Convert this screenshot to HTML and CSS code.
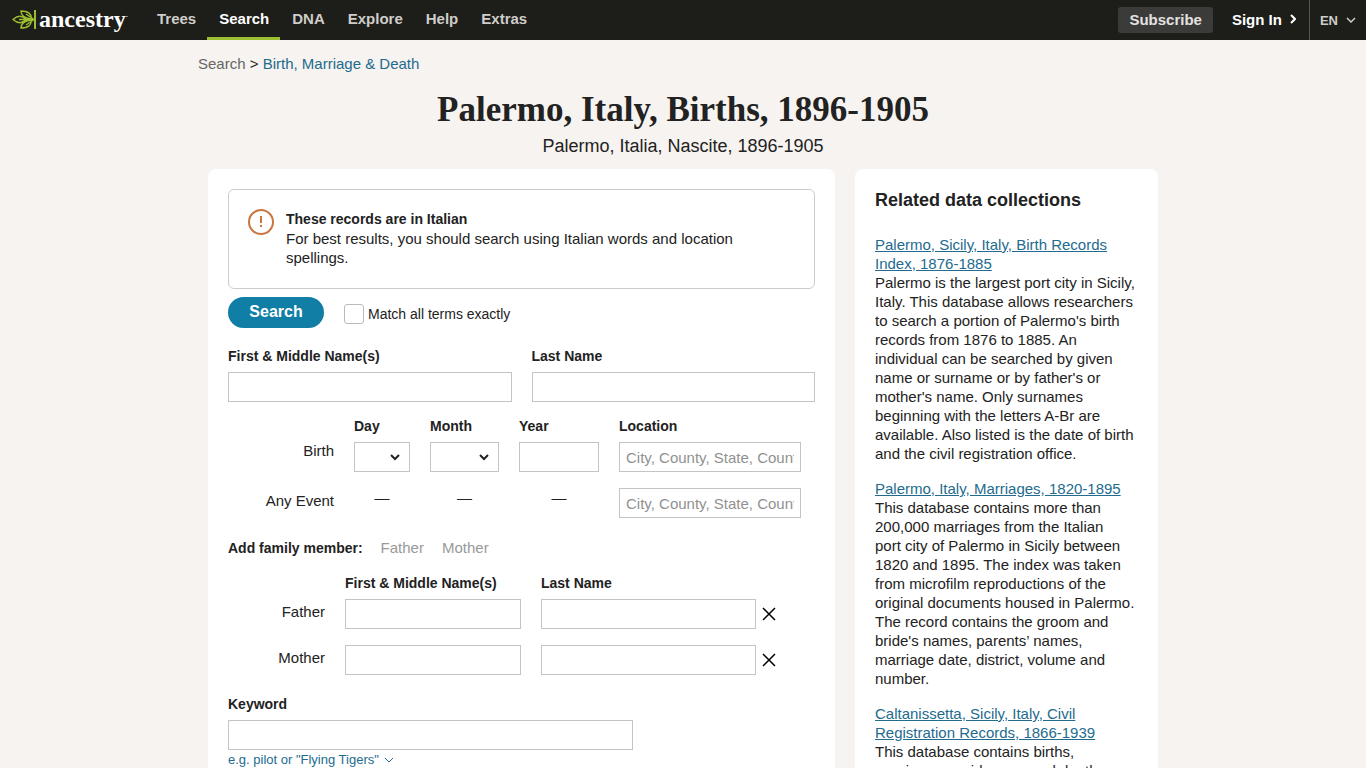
FILE: index.html
```html
<!DOCTYPE html>
<html lang="en">
<head>
<meta charset="utf-8">
<meta name="viewport" content="width=device-width, initial-scale=1">
<title>Palermo, Italy, Births, 1896-1905</title>
<link rel="stylesheet" href="styles.css">
</head>
<body>
<header class="site-header">
  <a class="brand" href="#" aria-label="ancestry">
    <svg class="brand-leaf" viewBox="0 0 24 20" aria-hidden="true">
      <path class="bar" d="M23 0V19"/>
      <path d="M19 9C20 4 16 1 9 1C9 5 12 8 19 9M19 10C20 15 16 18 9 18C9 14 12 11 19 10M22 9.500H7M14 9.500C10 5 5 6 1 9.500C5 13 10 14 14 9.500M22 9.500L14 4M22 9.500L14 15"/>
    </svg>
    <span class="brand-name">ancestry</span><span class="brand-dot">.</span>
  </a>
  <nav class="main-nav" aria-label="Main">
    <a href="#">Trees</a>
    <a class="active" href="#">Search</a>
    <a href="#">DNA</a>
    <a href="#">Explore</a>
    <a href="#">Help</a>
    <a href="#">Extras</a>
  </nav>
  <div class="account">
    <a class="subscribe" href="#">Subscribe</a>
    <a class="sign-in" href="#">Sign In
      <svg width="6" height="10" viewBox="0 0 6 10" aria-hidden="true"><path d="M1 1L5 5L1 9"/></svg>
    </a>
    <button class="language" type="button">EN
      <svg width="10" height="6" viewBox="0 0 10 6" aria-hidden="true"><path d="M1 1L5 5L9 1"/></svg>
    </button>
  </div>
</header>

<div class="page">
  <nav class="breadcrumb" aria-label="Breadcrumb"><a class="muted" href="#">Search</a> &gt; <a href="#">Birth, Marriage &amp; Death</a></nav>
  <div class="titles">
    <h1>Palermo, Italy, Births, 1896-1905</h1>
    <p>Palermo, Italia, Nascite, 1896-1905</p>
  </div>

  <div class="columns">
    <main class="card search-card">
      <div class="notice">
        <svg class="notice-icon" viewBox="0 0 26 26" aria-hidden="true">
          <circle cx="13" cy="13" r="12"/><path d="M13 7V14M13 16V18"/>
        </svg>
        <div>
          <h2>These records are in Italian</h2>
          <p>For best results, you should search using Italian words and location spellings.</p>
        </div>
      </div>

      <form>
        <div class="actions">
          <button class="search-button" type="submit">Search</button>
          <label class="exact"><input type="checkbox"> Match all terms exactly</label>
        </div>

        <div class="names">
          <label>First &amp; Middle Name(s)<input type="text"></label>
          <label>Last Name<input type="text"></label>
        </div>

        <div class="events">
          <span></span>
          <label for="day">Day</label>
          <label for="month">Month</label>
          <label for="year">Year</label>
          <label for="birth-place">Location</label>
          <span class="row-label birth-label">Birth</span>
          <span class="select-box"><select id="day"><option></option></select></span>
          <span class="select-box"><select id="month"><option></option></select></span>
          <input id="year" type="text">
          <input id="birth-place" type="text" placeholder="City, County, State, Country">
          <label class="row-label event-label" for="event-place">Any Event</label>
          <span class="dash">—</span>
          <span class="dash">—</span>
          <span class="dash">—</span>
          <input class="event-place" id="event-place" type="text" placeholder="City, County, State, Country">
        </div>

        <div class="family-add">
          <strong>Add family member:</strong>
          <button type="button" disabled>Father</button>
          <button type="button" disabled>Mother</button>
        </div>

        <div class="family">
          <span></span>
          <span class="heading">First &amp; Middle Name(s)</span>
          <span class="heading">Last Name</span>
          <span></span>
          <span class="row-label">Father</span>
          <input type="text" aria-label="Father first and middle names">
          <input type="text" aria-label="Father last name">
          <button class="remove" type="button" aria-label="Remove father"><svg width="14" height="14" viewBox="0 0 14 14" aria-hidden="true"><path d="M1 1L13 13M13 1L1 13"/></svg></button>
          <span class="row-label">Mother</span>
          <input type="text" aria-label="Mother first and middle names">
          <input type="text" aria-label="Mother last name">
          <button class="remove" type="button" aria-label="Remove mother"><svg width="14" height="14" viewBox="0 0 14 14" aria-hidden="true"><path d="M1 1L13 13M13 1L1 13"/></svg></button>
        </div>

        <div class="keyword">
          <label>Keyword<input type="text"></label>
          <a href="#">e.g. pilot or "Flying Tigers"
            <svg width="10" height="6" viewBox="0 0 10 6" aria-hidden="true"><path d="M1 1L5 5L9 1"/></svg>
          </a>
        </div>
      </form>
    </main>

    <aside class="card related">
      <h2>Related data collections</h2>
      <article>
        <a href="#">Palermo, Sicily, Italy, Birth Records Index, 1876-1885</a>
        <p>Palermo is the largest port city in Sicily, Italy. This database allows researchers to search a portion of Palermo's birth records from 1876 to 1885. An individual can be searched by given name or surname or by father's or mother's name. Only surnames beginning with the letters A-Br are available. Also listed is the date of birth and the civil registration office.</p>
      </article>
      <article>
        <a href="#">Palermo, Italy, Marriages, 1820-1895</a>
        <p>This database contains more than<br>200,000 marriages from the Italian<br>port city of Palermo in Sicily between<br>1820 and 1895. The index was taken<br>from microfilm reproductions of the<br>original documents housed in Palermo.<br>The record contains the groom and<br>bride's names, parents’ names,<br>marriage date, district, volume and<br>number.</p>
      </article>
      <article>
        <a href="#">Caltanissetta, Sicily, Italy, Civil Registration Records, 1866-1939</a>
        <p>This database contains births,<br>marriages, residences, and deaths.</p>
      </article>
    </aside>
  </div>
</div>
</body>
</html>
```

FILE: styles.css
```css
* { box-sizing: border-box; }

body {
  margin: 0;
  background: #f6f3f0;
  color: #222;
  font: 15px/19px "Liberation Sans", Arial, sans-serif;
}

h1, h2, p { margin: 0; }
a { color: #236b8e; text-decoration: none; }
button { font: inherit; border: 0; padding: 0; background: none; }
svg { fill: none; stroke: currentColor; }

.site-header {
  display: flex;
  height: 40px;
  background: #1d1d19;
}
.site-header a, .language { color: #cfcdca; font-weight: bold; }

.brand { display: flex; align-items: center; width: 145px; padding-left: 12px; }
.brand-leaf { width: 24px; height: 20px; stroke: #9cbe30; stroke-width: 1.4; }
.brand-leaf .bar { stroke-width: 2; }
.brand-name { margin: 0 0 2px 3px; color: #fff; font: bold 24px/24px "Liberation Serif", serif; }
.brand-dot { margin-bottom: 12px; font-size: 8px; }

.main-nav { display: flex; }
.main-nav a { padding: 9px 11px 0 12px; border-bottom: 3px solid transparent; }
.main-nav .active { color: #fff; border-color: #9cbe30; }

.account { display: flex; align-items: center; margin-left: auto; }
.account .subscribe { padding: 3px 11px 4px; border-radius: 3px; background: #3b3b39; color: #e4e2e0; }
.account .sign-in { display: flex; align-items: center; gap: 8px; padding: 0 13px 2px 19px; color: #fff; }
.sign-in svg { stroke-width: 2; }
.language {
  display: flex;
  align-items: center;
  gap: 8px;
  height: 40px;
  padding: 0 10px;
  border-left: 1px solid #555;
  font-size: 13px;
}
.language svg, .remove svg { stroke-width: 1.5; }

.page { width: 100%; max-width: 970px; margin: 0 auto; padding: 14px 0 40px; }
.breadcrumb .muted { color: #666; }
.titles { padding: 16px 0 10px; text-align: center; }
h1 { font: bold 35px/42px "Liberation Serif", serif; }
.titles p { padding-top: 3px; font-size: 18px; line-height: 25px; }

.columns { display: grid; grid-template-columns: minmax(0, 627fr) minmax(0, 303fr); gap: 20px; padding: 0 10px; }
.card { padding: 20px; border-radius: 8px; background: #fff; }

.notice { display: flex; gap: 12px; min-height: 100px; padding: 19px; border: 1px solid #ccc; border-radius: 6px; }
.notice-icon { flex: none; width: 26px; height: 26px; color: #c8763f; stroke-width: 2; }
.notice h2 { font-size: 14px; line-height: 20px; }

.actions { display: flex; gap: 20px; padding-top: 8px; }
.search-button { width: 96px; height: 31px; padding-bottom: 2px; border-radius: 16px; background: #117ea6; color: #fff; font-size: 16px; font-weight: bold; }
.exact { display: flex; align-items: center; gap: 4px; padding-top: 3px; font-size: 14px; }
.exact input { appearance: none; width: 20px; height: 20px; margin: 0; border: 1px solid #bbb; border-radius: 3px; background: #fff; }

input[type="text"], .select-box {
  display: block;
  width: 100%;
  height: 30px;
  padding: 0 6px;
  border: 1px solid #c4c4c4;
  border-radius: 0;
  background: #fff;
  color: #222;
  font: inherit;
  font-weight: normal;
}
input::placeholder { color: #919191; }
.select-box select { width: 100%; height: 28px; border: 0; background: #fff; color: #222; font: inherit; }

.names { display: grid; grid-template-columns: 1fr 1fr; gap: 20px; padding-top: 19px; }
.names label, .events label, .heading, .keyword label { font-size: 14px; font-weight: bold; }
.names input, .keyword input { margin-top: 6px; font-size: 15px; }
.events .row-label, .row-label { font-size: 15px; font-weight: normal; text-align: right; }

.events {
  display: grid;
  grid-template-columns: 106px 56px 69px 80px 182px;
  column-gap: 20px;
  padding-top: 15px;
}
.events input, .events .select-box { margin-top: 6px; }
.events .event-place { margin-top: 16px; }
.events .birth-label { padding-top: 5px; }
.events .event-label { padding-top: 19px; }
.dash { padding-top: 16px; text-align: center; }

.family-add { display: flex; align-items: baseline; gap: 18px; padding-top: 20px; }
.family-add strong { font-size: 14px; }
.family-add button { color: #999; }

.family {
  display: grid;
  grid-template-columns: 97px 176px 215px 14px;
  column-gap: 20px;
  row-gap: 16px;
  padding-top: 16px;
}
.family .heading { margin-bottom: -10px; }
.family .row-label { padding-top: 3px; }
.remove { justify-self: start; margin-left: -14px; }
.remove svg { display: block; }

.keyword { width: 405px; padding-top: 20px; }
.keyword label { display: block; }
.keyword a { display: flex; align-items: center; gap: 5px; font-size: 13px; }

.related h2 { padding-bottom: 24px; font-size: 18px; line-height: 22px; }
.related a { text-decoration: underline; }
.related article { padding-bottom: 16px; }
```
